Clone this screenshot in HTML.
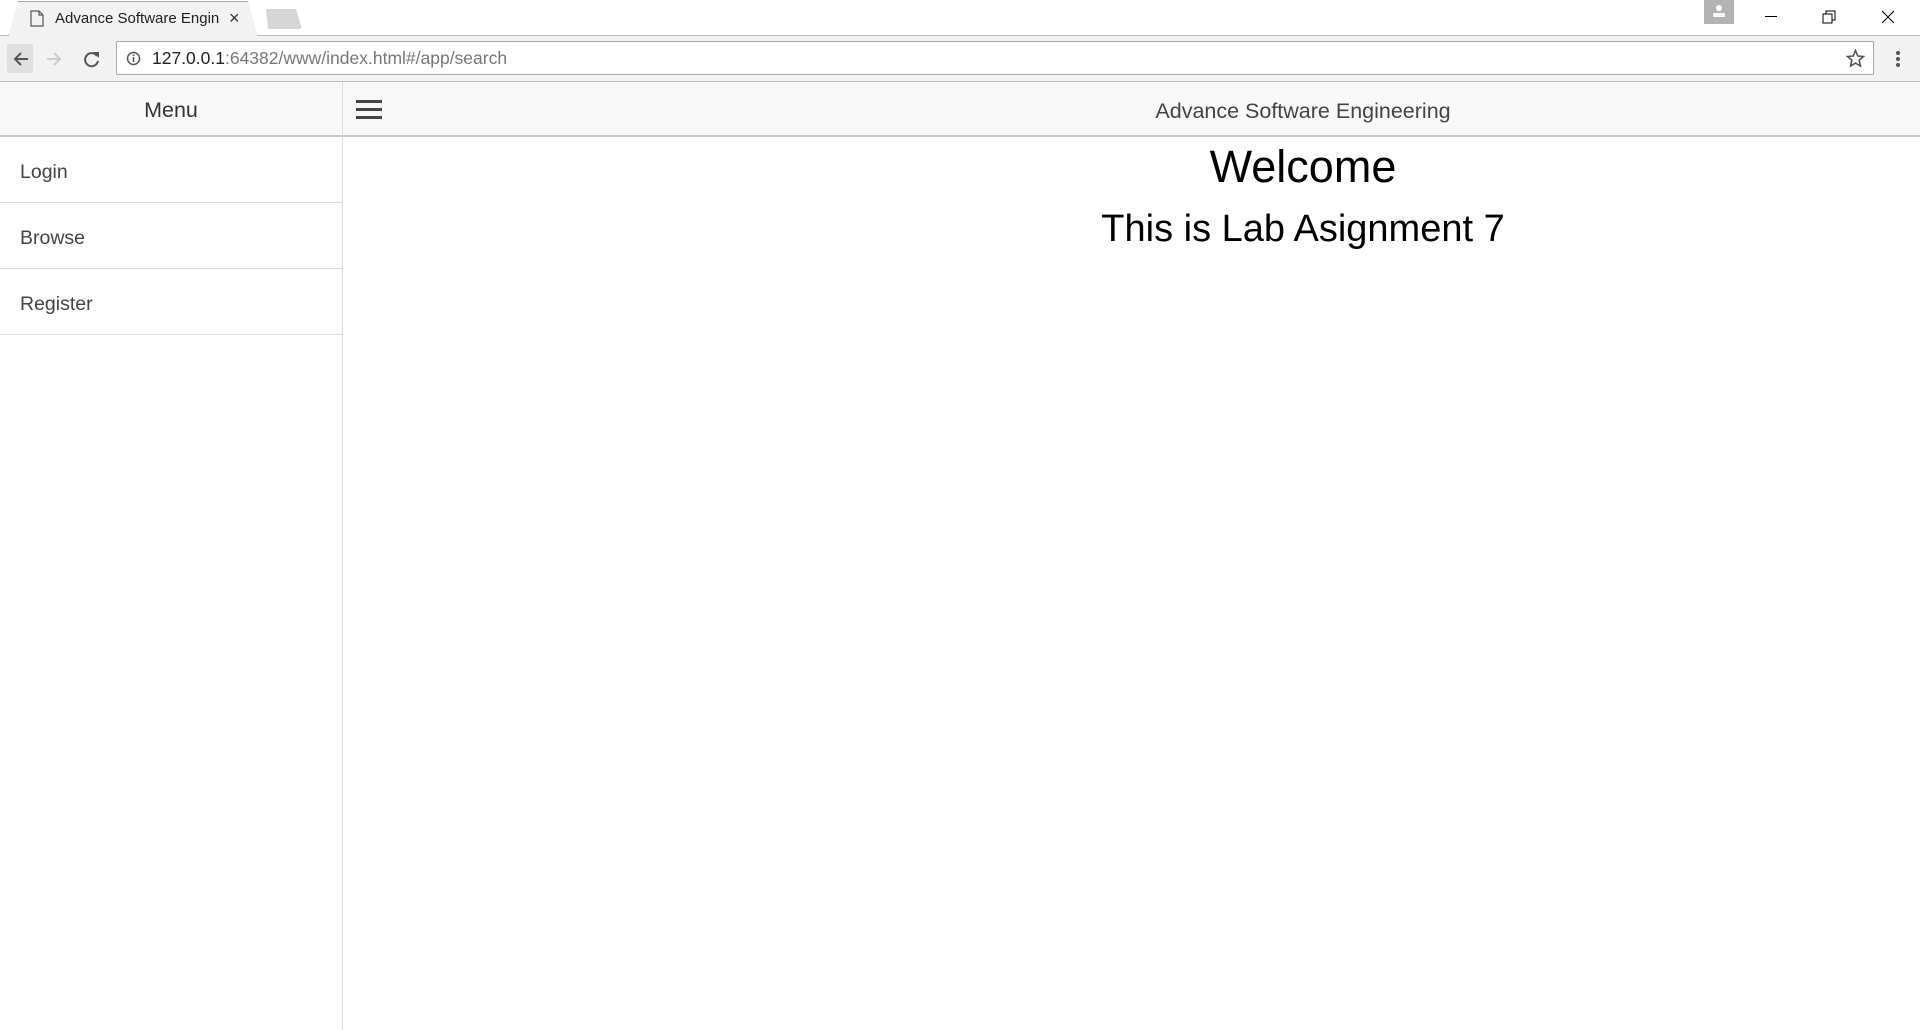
<!DOCTYPE html>
<html><head><meta charset="utf-8"><style>
*{box-sizing:border-box;margin:0;padding:0}
body{width:1920px;height:1030px;overflow:hidden;font-family:"Liberation Sans",sans-serif;background:#fff;position:relative}
.abs{position:absolute}
</style></head><body>
<!-- tab strip -->
<div class="abs" style="left:0;top:0;width:1920px;height:36px;background:#fff;border-bottom:1px solid #bbb"></div>
<div class="abs" style="left:8px;top:1px;width:250px;height:36px;background:#f2f2f2;border:1px solid #aaa;border-bottom:none;clip-path:polygon(4% 0,96% 0,100% 100%,0 100%);"></div>
<div class="abs" style="left:9px;top:2px;width:248px;height:35px;background:#f2f2f2;clip-path:polygon(4% 0,96% 0,100% 100%,0 100%);"></div>
<svg class="abs" style="left:30px;top:10px" width="14" height="17" viewBox="0 0 14 17"><path d="M1 1h8l4 4v11H1z M9 1v4h4" fill="none" stroke="#555" stroke-width="1.2"/></svg>
<div class="abs" style="left:55px;top:10px;font-size:15px;color:#222;white-space:nowrap;width:165px;overflow:hidden">Advance Software Engine</div>
<div class="abs" style="left:229px;top:8px;font-size:18px;color:#333">×</div>
<div class="abs" style="left:262px;top:9px;width:40px;height:20px;background:#d6d6d6;clip-path:polygon(10% 0,85% 0,100% 100%,15% 100%);border-radius:3px"></div>
<div class="abs" style="left:1704px;top:0;width:30px;height:24px;background:#b3b3b3"></div>
<svg class="abs" style="left:1711px;top:3px" width="16" height="14"><circle cx="8" cy="5" r="3" fill="#fff"/><rect x="2" y="10" width="12" height="4" rx="1" fill="#fff"/></svg>
<div class="abs" style="left:1765px;top:16px;width:12px;height:1px;background:#000"></div>
<svg class="abs" style="left:1822px;top:10px" width="14" height="14"><path d="M1 4h9v9H1z M4 4V1h9v9h-3" fill="none" stroke="#000"/></svg>
<svg class="abs" style="left:1881px;top:10px" width="14" height="14"><path d="M1 1l12 12M13 1L1 13" stroke="#000"/></svg>
<!-- toolbar -->
<div class="abs" style="left:0;top:36px;width:1920px;height:46px;background:#f2f2f2;border-bottom:1px solid #bbb"></div>
<div class="abs" style="left:7px;top:44px;width:26px;height:29px;background:#e0e0e0;border-radius:2px"></div>
<svg class="abs" style="left:12px;top:50px" width="18" height="18"><path d="M16 9H3M9 3L3 9l6 6" fill="none" stroke="#555" stroke-width="2"/></svg>
<svg class="abs" style="left:45px;top:50px" width="18" height="18"><path d="M2 9h13M9 3l6 6-6 6" fill="none" stroke="#ccc" stroke-width="2"/></svg>
<svg class="abs" style="left:83px;top:50px" width="18" height="18"><path d="M14 6A6.5 6.5 0 1 0 15 11" fill="none" stroke="#555" stroke-width="2"/><path d="M10 2h6v6z" fill="#555"/></svg>
<div class="abs" style="left:116px;top:41px;width:1758px;height:34px;background:#fff;border:1px solid #aaa;border-radius:2px"></div>
<svg class="abs" style="left:126px;top:51px" width="15" height="15"><circle cx="7.5" cy="7.5" r="6" fill="none" stroke="#555" stroke-width="1.5"/><path d="M7.5 6v5M7.5 3.5v1.5" stroke="#555" stroke-width="1.6"/></svg>
<div class="abs" style="left:152px;top:48px;font-size:17.5px;color:#222">127.0.0.1<span style="color:#777">:64382/www/index.html#/app/search</span></div>
<svg class="abs" style="left:1846px;top:49px" width="19" height="19" viewBox="0 0 24 24"><path d="M12 2l2.9 6.9 7.1.6-5.4 4.7 1.6 7.3L12 17.8 5.8 21.5l1.6-7.3L2 9.5l7.1-.6z" fill="none" stroke="#555" stroke-width="2"/></svg>
<svg class="abs" style="left:1895px;top:50px" width="6" height="18"><circle cx="3" cy="3" r="2" fill="#555"/><circle cx="3" cy="9" r="2" fill="#555"/><circle cx="3" cy="15" r="2" fill="#555"/></svg>
<!-- app header -->
<div class="abs" style="left:0;top:82px;width:1920px;height:55px;background:#f8f8f8;border-bottom:2px solid #c8c8c8"></div>
<div class="abs" style="left:342px;top:82px;width:1px;height:948px;background:#ddd"></div>
<div class="abs" style="left:0;top:98px;width:342px;text-align:center;font-size:21.5px;color:#333">Menu</div>
<div class="abs" style="left:356px;top:100px;width:26px;height:3px;background:#444"></div>
<div class="abs" style="left:356px;top:108px;width:26px;height:3px;background:#444"></div>
<div class="abs" style="left:356px;top:116px;width:26px;height:3px;background:#444"></div>
<div class="abs" style="left:686px;top:99px;width:1234px;text-align:center;font-size:21.5px;color:#444">Advance Software Engineering</div>
<!-- menu -->
<div class="abs" style="left:0;top:137px;width:342px;">
<div style="height:66px;border-bottom:1px solid #ddd;padding:24px 20px;font-size:19.5px;color:#444">Login</div>
<div style="height:66px;border-bottom:1px solid #ddd;padding:24px 20px;font-size:19.5px;color:#444">Browse</div>
<div style="height:66px;border-bottom:1px solid #ddd;padding:24px 20px;font-size:19.5px;color:#444">Register</div>
</div>
<!-- content -->
<div class="abs" style="left:686px;top:140px;width:1234px;text-align:center;font-size:45px;color:#000;line-height:54px">Welcome</div>
<div class="abs" style="left:686px;top:206px;width:1234px;text-align:center;font-size:38px;color:#000;line-height:46px">This is Lab Asignment 7</div>
</body></html>
